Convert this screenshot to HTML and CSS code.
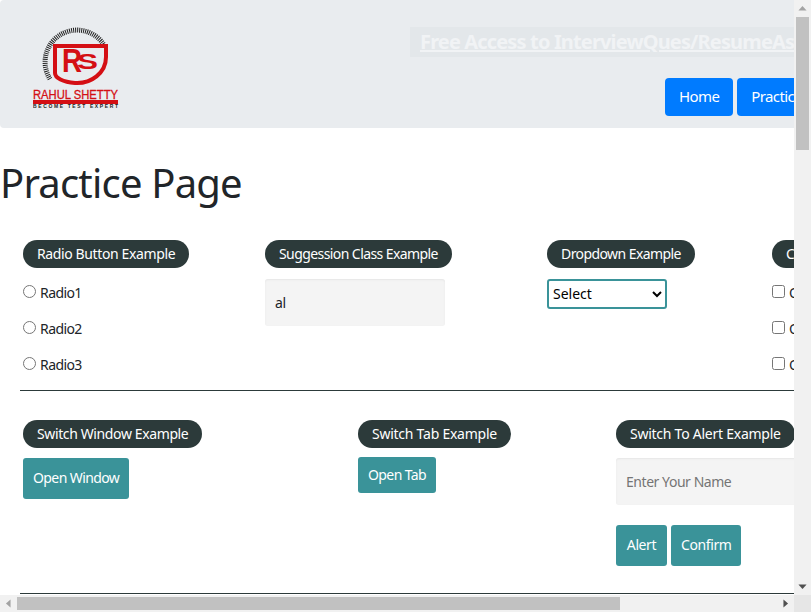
FILE: index.html
```html
<!DOCTYPE html>
<html lang="en">
<head>
  <meta charset="UTF-8" />
  <title>Practice Page</title>
  <link rel="stylesheet" href="styles.css">
</head>
<body>
  <div class="window">
    <div class="viewport">
      <div class="page">
        <header class="topbar">
          <svg class="logo" width="86" height="86" viewBox="0 0 86 86" role="img" aria-label="Rahul Shetty Academy">
            <path class="logo-ring" d="M17 56A31 31 0 1 1 71 22" />
            <path class="logo-shield" d="M22 23H73V34C73 50 58 61 42 60C30 59 22 55 22 50Z" />
            <text class="logo-r" x="29" y="49" textLength="20" lengthAdjust="spacingAndGlyphs">R</text>
            <text class="logo-s" x="44" y="46" textLength="21" lengthAdjust="spacingAndGlyphs">S</text>
            <text class="logo-name" x="0" y="75.5" textLength="85" lengthAdjust="spacingAndGlyphs">RAHUL SHETTY</text>
            <rect class="logo-bar" x="0" y="77" width="85" height="4" />
            <text class="logo-tag" x="0" y="85" textLength="85" lengthAdjust="spacing">BECOME TEST EXPERT</text>
          </svg>
          <div class="topbar-right">
            <a class="banner" href="#">Free Access to InterviewQues/ResumeAssistance/Material</a>
            <nav class="nav">
              <button class="nav-btn">Home</button>
              <button class="nav-btn">Practice</button>
              <button class="nav-btn">Login</button>
            </nav>
          </div>
        </header>

        <h1 class="title">Practice Page</h1>

        <section class="row row-one">
          <div class="block">
            <div class="legend">Radio Button Example</div>
            <label class="check"><input type="radio" name="radio"> Radio1</label>
            <label class="check"><input type="radio" name="radio"> Radio2</label>
            <label class="check"><input type="radio" name="radio"> Radio3</label>
          </div>
          <div class="block">
            <div class="legend legend-tight">Suggession Class Example</div>
            <input class="field field-suggest" type="text" value="al">
          </div>
          <div class="block">
            <div class="legend legend-tight">Dropdown Example</div>
            <select class="dropdown"><option>Select</option></select>
          </div>
          <div class="block">
            <div class="legend">Checkbox Example</div>
            <label class="check"><input type="checkbox"> Option1</label>
            <label class="check"><input type="checkbox"> Option2</label>
            <label class="check"><input type="checkbox"> Option3</label>
          </div>
        </section>

        <hr class="rule">

        <section class="row row-two">
          <div class="block">
            <div class="legend">Switch Window Example</div>
            <button class="btn btn-window">Open Window</button>
          </div>
          <div class="block">
            <div class="legend legend-loose">Switch Tab Example</div>
            <button class="btn btn-tab">Open Tab</button>
          </div>
          <div class="block">
            <div class="legend legend-loose">Switch To Alert Example</div>
            <input class="field field-name" type="text" placeholder="Enter Your Name">
            <div class="btn-group">
              <button class="btn">Alert</button>
              <button class="btn">Confirm</button>
            </div>
          </div>
        </section>

        <hr class="rule">
      </div>
    </div>

    <div class="scroll scroll-v">
      <span class="arrow arrow-up"></span>
      <div class="thumb-v"></div>
      <span class="arrow arrow-down"></span>
    </div>
    <div class="scroll scroll-h">
      <span class="arrow arrow-left"></span>
      <div class="thumb-h"></div>
      <span class="arrow arrow-right"></span>
    </div>
    <div class="scroll-corner"></div>
  </div>
</body>
</html>
```

FILE: styles.css
```css
:root {
  --teal: #3a9399;
  --dark: #2c3a3a;
  --text: #212529;
  --field-bg: #f4f4f4;
  --bar-bg: #f1f1f1;
  --thumb: #c1c1c1;
}

* {
  box-sizing: border-box;
}

body {
  margin: 0;
  overflow: hidden;
  font-family: "Noto Sans", "Open Sans", sans-serif;
  font-size: 14px;
  color: var(--text);
  background-color: #ffffff;
}

.window {
  display: grid;
  grid-template-columns: 794px 17px;
  grid-template-rows: 595px 17px;
  width: 811px;
  height: 612px;
}

.viewport {
  overflow: hidden;
}

.page {
  width: 1000px;
}

/* header */
.topbar {
  display: flex;
  height: 128px;
  background-color: #e9ecef;
  border-radius: 4px;
}

.logo {
  flex: none;
  margin: 23px 0 0 33px;
}

.logo-ring {
  fill: none;
  stroke: #222222;
  stroke-width: 5;
  stroke-dasharray: 1 1;
}

.logo-shield {
  fill: #e9ecef;
  stroke: #d40f14;
  stroke-width: 4;
}

.logo-r,
.logo-s,
.logo-name,
.logo-tag {
  font-family: "Liberation Sans", sans-serif;
}

.logo-r {
  font-size: 33px;
  font-weight: 700;
  fill: #d40f14;
}

.logo-s {
  font-size: 22px;
  font-weight: 700;
  fill: #d40f14;
}

.logo-name {
  font-size: 12.5px;
  fill: #d40f14;
  stroke: #d40f14;
  stroke-width: 0.3px;
}

.logo-bar {
  fill: #d40f14;
}

.logo-tag {
  font-size: 5px;
  font-weight: 700;
  fill: #222222;
}

.topbar-right {
  margin: 27px 0 0 291px;
}

.banner {
  display: block;
  width: 590px;
  height: 30px;
  padding: 0 10px;
  font-size: 20px;
  font-weight: 700;
  line-height: 30px;
  letter-spacing: -0.85px;
  white-space: nowrap;
  color: #f1f3f5;
  background-color: #e3e7ea;
}

.nav {
  display: flex;
  gap: 4px;
  margin: 21px 0 0 255px;
}

.nav-btn {
  height: 38px;
  padding: 0 14px 2px;
  font-family: inherit;
  font-size: 15px;
  letter-spacing: -0.6px;
  color: #ffffff;
  background-color: #007bff;
  border: none;
  border-radius: 4px;
}

/* page body */
.title {
  margin: 0;
  padding-top: 28px;
  font-size: 40px;
  font-weight: 400;
  line-height: 54px;
  letter-spacing: -0.8px;
}

.row {
  display: grid;
  padding-left: 23px;
}

.row-one {
  grid-template-columns: 242px 282px 225px 1fr;
  height: 150px;
  margin-top: 30px;
}

.row-two {
  grid-template-columns: 335px 258px 1fr;
  height: 173px;
  margin-top: 29px;
}

.legend {
  display: table;
  height: 28px;
  padding: 0 14px;
  line-height: 27px;
  letter-spacing: -0.38px;
  white-space: nowrap;
  color: #ffffff;
  background-color: var(--dark);
  border-radius: 14px;
}

.legend-tight {
  letter-spacing: -0.58px;
}

.legend-loose {
  letter-spacing: -0.25px;
}

.check {
  display: block;
  height: 36px;
  line-height: 36px;
  letter-spacing: -0.6px;
  white-space: nowrap;
}

.legend + .check {
  margin-top: 7px;
}

.check input {
  width: 13px;
  height: 13px;
  margin: 0 1px 0 0;
}

.field {
  display: block;
  height: 47px;
  padding: 0 10px;
  font-family: inherit;
  font-size: 14px;
  letter-spacing: -0.45px;
  color: var(--text);
  background-color: var(--field-bg);
  border: none;
  border-radius: 3px;
  box-shadow: inset 0 1px 2px #e6e6e6;
}

.field-suggest {
  width: 180px;
  margin-top: 11px;
}

.field-name {
  width: 260px;
  margin-top: 10px;
}

.dropdown {
  display: block;
  width: 120px;
  height: 30px;
  margin-top: 11px;
  padding-bottom: 2px;
  font-family: inherit;
  font-size: 14px;
  background-color: #ffffff;
  border: 2px solid var(--teal);
  border-radius: 3px;
}

.btn {
  height: 41px;
  padding: 0 10px 2px;
  font-family: inherit;
  font-size: 14px;
  letter-spacing: -0.6px;
  color: #ffffff;
  background-color: var(--teal);
  border: none;
  border-radius: 3px;
}

.btn-window {
  display: block;
  margin-top: 10px;
}

.btn-tab {
  display: block;
  height: 36px;
  margin-top: 9px;
}

.btn-group {
  display: flex;
  gap: 4px;
  margin-top: 20px;
}

.btn-group .btn {
  letter-spacing: -0.4px;
}

.btn-group .btn:first-child {
  min-width: 51px;
}

.rule {
  margin: 0 0 0 20px;
  border: none;
  border-top: 1px solid var(--dark);
}

/* scrollbars */
.scroll {
  display: flex;
  align-items: center;
  background-color: var(--bar-bg);
}

.scroll-v {
  flex-direction: column;
}

.scroll-h {
  grid-column: 1;
}

.scroll-corner {
  background-color: #e6e6e6;
}

.thumb-v {
  flex: none;
  width: 13px;
  height: 133px;
  background-color: var(--thumb);
}

.thumb-h {
  flex: none;
  width: 603px;
  height: 13px;
  background-color: var(--thumb);
}

.arrow {
  display: block;
  flex: none;
  width: 17px;
  height: 17px;
}

.arrow-up {
  background-color: #a3a3a3;
  clip-path: polygon(50% 35%, 74% 62%, 26% 62%);
}

.arrow-down {
  margin-top: auto;
  background-color: #505050;
  clip-path: polygon(26% 38%, 74% 38%, 50% 65%);
}

.arrow-left {
  background-color: #a3a3a3;
  clip-path: polygon(62% 26%, 62% 74%, 35% 50%);
}

.arrow-right {
  margin-left: auto;
  background-color: #505050;
  clip-path: polygon(38% 26%, 65% 50%, 38% 74%);
}
```
